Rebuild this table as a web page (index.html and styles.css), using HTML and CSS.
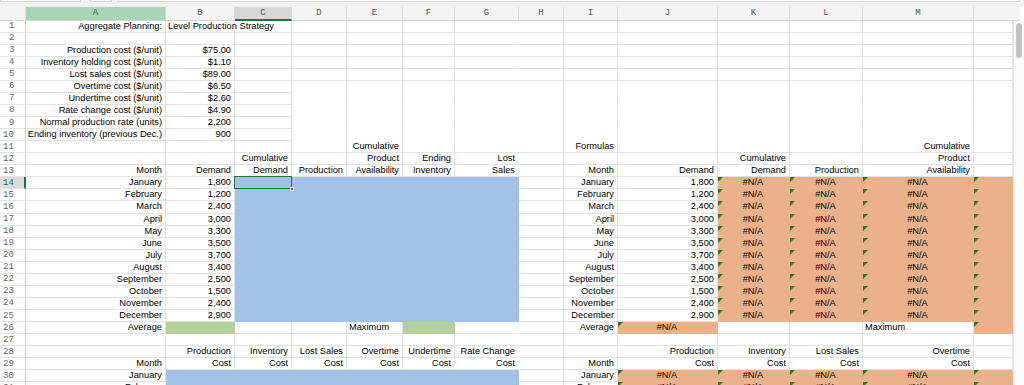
FILE: index.html
```html
<!DOCTYPE html>
<html lang="en">
<head>
<meta charset="utf-8">
<title>Aggregate Planning: Level Production Strategy</title>
<link rel="stylesheet" href="styles.css">
</head>
<body>
<div class="app">
  <div class="topbar">
    <div class="namebox"></div>
    <div class="fxbox"></div>
    <div class="formula"></div>
  </div>
  <div class="main">
    <div class="grid" id="grid"></div>
    <div class="vscroll">
      <div class="vscroll-head"></div>
      <div class="vscroll-track"><div class="thumb"></div></div>
    </div>
  </div>
</div>
<script src="script.js"></script>
</body>
</html>
```

FILE: styles.css
```css
* { box-sizing: border-box; }
html, body { margin: 0; padding: 0; background: #fff; }
body {
  font-family: "Liberation Sans", Arial, sans-serif;
  font-size: 9.25px;
  color: #000;
  overflow: hidden;
}
.app { width: 1024px; height: 385px; overflow: hidden; display: flex; flex-direction: column; }

.topbar { height: 7px; background: #f1f1f1; display: flex; align-items: flex-start; flex: none; }
.namebox { width: 81px; height: 2px; background: #fff; border: 1px solid #d4d4d4; border-top: 0; }
.fxbox { width: 22px; height: 2px; margin-left: 9px; background: #fff; border: 1px solid #d4d4d4; border-top: 0; }
.formula { flex: 1; height: 2px; margin-left: 6px; margin-right: 4px; background: #fff; border: 1px solid #d4d4d4; border-top: 0; }

.main { display: flex; flex: 1; }
.grid {
  display: grid;
  grid-template-columns: 26px 140px 69px 57px 55px 56px 52px 64px 45px 54px 100px 72px 73px 111px 39px;
  grid-template-rows: 13.5px repeat(31, 12.07px);
  width: 1013px;
}
.vscroll { width: 11px; display: flex; flex-direction: column; }
.vscroll-head { height: 13.5px; background: #f3f3f3; border-bottom: 1px solid #d6d6d6; margin-right: 4px; }
.vscroll-track { flex: 1; background: #fbfbfb; border-left: 1px solid #e6e6e6; padding: 2px 1px 0 2px; }
.thumb { width: 6px; height: 35px; background: #c2c2c2; border-radius: 3px; }

.hd {
  background: #f3f3f3;
  border-right: 1px solid #d9d9d9;
  border-bottom: 1px solid #d6d6d6;
  font-family: "Liberation Mono", "DejaVu Sans Mono", monospace;
  font-size: 9px;
  color: #555;
  display: flex; align-items: center; justify-content: center;
}
.hd.corner { background: #f3f3f3; }
.hd.green { background: #aad4b6; }
.hd.sel { background: #d8d8d8; border-bottom: 2px solid #1f7246; }
.hd.last { border-right: 0; }

.rn {
  background: #fff;
  border-right: 1px solid #cfcfcf;
  border-bottom: 1px solid #e3e3e3;
  font-family: "Liberation Mono", "DejaVu Sans Mono", monospace;
  font-size: 9px;
  color: #666;
  display: flex; align-items: center; justify-content: flex-start;
  padding-left: 9px;
}
.rn.two { padding-left: 3px; }
.rn.sel { background: #dcdcdc; color: #1f7246; border-right: 2px solid #1f7246; }

.c {
  border-right: 1px solid #e2e2e2;
  border-bottom: 1px solid #e2e2e2;
  white-space: nowrap;
  line-height: 11px;
  padding: 0 3px 0 2px;
  display: flex; align-items: center;
}
.c.r { justify-content: flex-end; }
.c.l { justify-content: flex-start; }
.c.m { justify-content: center; }
.c.nb { border-bottom-color: transparent; }
.c.nr { border-right-color: transparent; }

.c.blue { background: #a3c1e4; border-color: #a3c1e4; }
.c.green { background: #b3cf9a; border-color: #b3cf9a; }
.c.orange { background: #eab18a; border-color: #eab18a; }

.c.err { position: relative; }
.c.err::before {
  content: "";
  position: absolute; left: 0; top: 0;
  border-top: 5px solid #2f7a1f;
  border-right: 5px solid transparent;
}
.c.cur { position: relative; }
.c.cur::after {
  content: "";
  position: absolute; left: -1px; top: -1px; right: -1px; bottom: -1px;
  border: 1.5px solid #1f7246;
}
.c.cur .handle {
  position: absolute; right: -3px; bottom: -3px;
  width: 4px; height: 4px; background: #1f7246; border: 1px solid #fff; z-index: 2;
}
```

FILE: script.js
```js
(function () {
  var COLS = ['A','B','C','D','E','F','G','H','I','J','K','L','M','N'];
  var grid = document.getElementById('grid');
  var NROWS = 31;

  var data = {
    A1: ['Aggregate Planning:', 'r'], B1: ['Level Production Strategy', 'l'],
    A3: ['Production cost ($/unit)', 'r'], B3: ['$75.00', 'r'],
    A4: ['Inventory holding cost ($/unit)', 'r'], B4: ['$1.10', 'r'],
    A5: ['Lost sales cost ($/unit)', 'r'], B5: ['$89.00', 'r'],
    A6: ['Overtime cost ($/unit)', 'r'], B6: ['$6.50', 'r'],
    A7: ['Undertime cost ($/unit)', 'r'], B7: ['$2.60', 'r'],
    A8: ['Rate change cost ($/unit)', 'r'], B8: ['$4.90', 'r'],
    A9: ['Normal production rate (units)', 'r'], B9: ['2,200', 'r'],
    A10: ['Ending inventory (previous Dec.)', 'r'], B10: ['900', 'r'],
    E11: ['Cumulative', 'r'], I11: ['Formulas', 'r'], M11: ['Cumulative', 'r'],
    C12: ['Cumulative', 'r'], E12: ['Product', 'r'], F12: ['Ending', 'r'], G12: ['Lost', 'r'],
    K12: ['Cumulative', 'r'], M12: ['Product', 'r'],
    A13: ['Month', 'r'], B13: ['Demand', 'r'], C13: ['Demand', 'r'], D13: ['Production', 'r'],
    E13: ['Availability', 'r'], F13: ['Inventory', 'r'], G13: ['Sales', 'r'],
    I13: ['Month', 'r'], J13: ['Demand', 'r'], K13: ['Demand', 'r'], L13: ['Production', 'r'], M13: ['Availability', 'r'],
    A26: ['Average', 'r'], E26: ['Maximum', 'l'], I26: ['Average', 'r'], J26: ['#N/A', 'm'], M26: ['Maximum', 'l'],
    B28: ['Production', 'r'], C28: ['Inventory', 'r'], D28: ['Lost Sales', 'r'], E28: ['Overtime', 'r'],
    F28: ['Undertime', 'r'], G28: ['Rate Change', 'r'],
    J28: ['Production', 'r'], K28: ['Inventory', 'r'], L28: ['Lost Sales', 'r'], M28: ['Overtime', 'r'],
    A29: ['Month', 'r'], I29: ['Month', 'r'],
    A30: ['January', 'r'], I30: ['January', 'r'],
    A31: ['February', 'r'], I31: ['February', 'r']
  };
  ['B','C','D','E','F','G','J','K','L','M'].forEach(function (c) { data[c + '29'] = ['Cost', 'r']; });
  ['J','K','L','M'].forEach(function (c) { data[c + '30'] = ['#N/A', 'm']; data[c + '31'] = ['#N/A', 'm']; });

  var months = ['January','February','March','April','May','June','July','August','September','October','November','December'];
  var demand = ['1,800','1,200','2,400','3,000','3,300','3,500','3,700','3,400','2,500','1,500','2,400','2,900'];
  months.forEach(function (m, i) {
    var r = 14 + i;
    data['A' + r] = [m, 'r']; data['B' + r] = [demand[i], 'r'];
    data['I' + r] = [m, 'r']; data['J' + r] = [demand[i], 'r'];
    ['K','L','M'].forEach(function (c) { data[c + r] = ['#N/A', 'm']; });
  });

  function ci(c) { return COLS.indexOf(c); }
  function inRange(col, row, c1, r1, c2, r2) {
    var i = ci(col);
    return i >= ci(c1) && i <= ci(c2) && row >= r1 && row <= r2;
  }
  function fill(col, row) {
    if (inRange(col, row, 'C', 14, 'G', 25) || inRange(col, row, 'B', 30, 'G', 31)) return 'blue';
    if ((col === 'B' || col === 'F') && row === 26) return 'green';
    if (inRange(col, row, 'K', 14, 'N', 25) || (col === 'N' && row === 26) ||
        (col === 'J' && row === 26) || inRange(col, row, 'J', 30, 'N', 31)) return 'orange';
    return '';
  }

  function el(cls, text) {
    var d = document.createElement('div');
    d.className = cls;
    if (text) d.textContent = text;
    return d;
  }

  grid.appendChild(el('hd corner'));
  COLS.forEach(function (c) {
    var cls = 'hd';
    if (c === 'A') cls += ' green';
    if (c === 'C') cls += ' sel';
    if (c === 'N') cls += ' last';
    grid.appendChild(el(cls, c === 'N' ? '' : c));
  });

  for (var r = 1; r <= NROWS; r++) {
    var rcls = 'rn' + (r >= 10 ? ' two' : '') + (r === 14 ? ' sel' : '');
    grid.appendChild(el(rcls, String(r)));
    COLS.forEach(function (c) {
      var key = c + r;
      var d = data[key];
      var cls = 'c ' + (d ? d[1] : 'l');
      var f = fill(c, r);
      if (f) cls += ' ' + f;
      if (f === 'orange') cls += ' err';
      if (!f) {
        if (r >= 6 && r <= 10 && ci(c) >= ci('D')) cls += ' nb';
        if (c === 'G') cls += ' nr';
      }
      if (key === 'C14') cls += ' cur';
      var cell = el(cls, d ? d[0] : '');
      if (key === 'C14') cell.appendChild(el('handle'));
      grid.appendChild(cell);
    });
  }
})();
```
